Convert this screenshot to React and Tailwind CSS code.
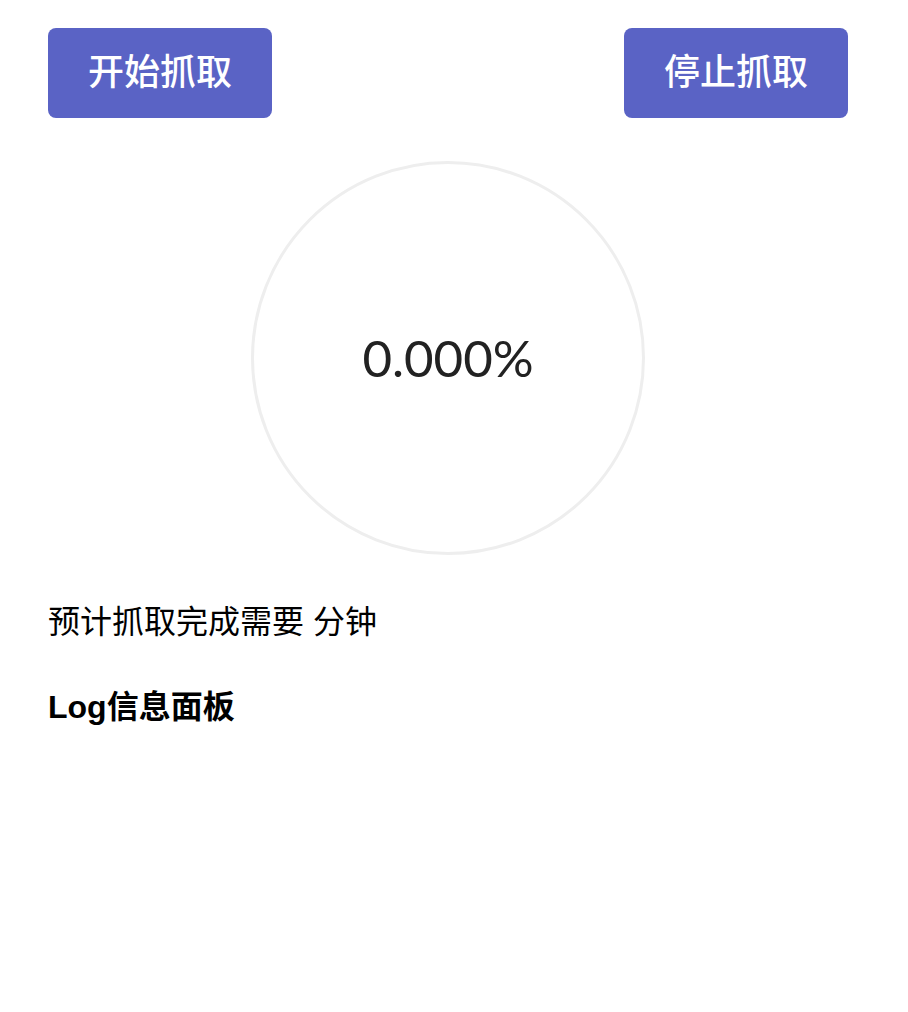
export default function App() {
  const progress = 0

  return (
    <div className="min-h-screen bg-white">
      <div className="w-[800px] ml-12 pt-[28px] font-['Liberation_Sans','Noto_Sans_CJK_SC',sans-serif]">
        <div className="flex justify-between">
          <button className="w-[224px] h-[90px] rounded-[8px] bg-[#5a63c5] text-white text-[36px] font-medium">
            开始抓取
          </button>
          <button className="w-[224px] h-[90px] rounded-[8px] bg-[#5a63c5] text-white text-[36px] font-medium">
            停止抓取
          </button>
        </div>

        <div className="flex justify-center mt-[43px]">
          <div className="w-[394px] h-[394px] rounded-full border-[3px] border-[#eeeeee] flex items-center justify-center">
            <span className="text-[51px] text-[#222] font-['Lato',sans-serif]">{progress.toFixed(3)}%</span>
          </div>
        </div>

        <p className="mt-[47px] text-[32px] leading-[40px] text-black">预计抓取完成需要 分钟</p>

        <h3 className="mt-[45px] text-[32px] leading-[40px] font-bold text-black">Log信息面板</h3>
      </div>
    </div>
  )
}
